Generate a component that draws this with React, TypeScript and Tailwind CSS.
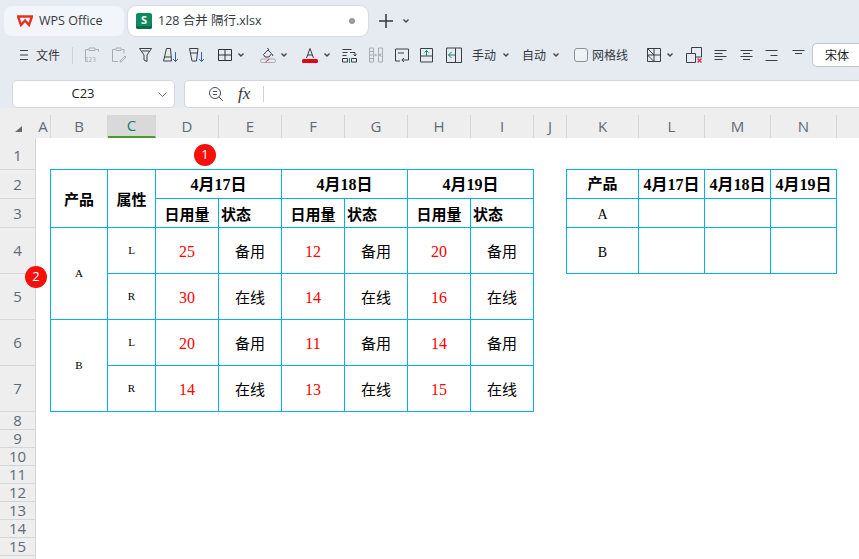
import type { ReactNode } from "react";

const ui = "font-['Noto_Sans_CJK_SC',sans-serif]";
const latin = "font-['Open_Sans','Noto_Sans_CJK_SC',sans-serif]";
const cellFont = "font-['Liberation_Serif','Noto_Sans_CJK_SC',serif]";
const cell =
  "flex items-center justify-center border border-[#00b0f0] -mr-px -mb-px whitespace-nowrap " + cellFont;
const head = cell + " pt-[3px] text-[15px] font-bold text-black";
const stateHead = cell + " !justify-start pl-[2px] pt-[4px] text-[15px] font-bold text-black";
const unitHead = cell + " pt-[4px] text-[15px] font-bold text-black";
const dateHead = cell + " pt-[2px] text-[16px] font-bold text-black";
const num = cell + " pt-[3px] text-[16px] text-[#ff0000]";
const status = cell + " pt-[3px] text-[15px] text-black";
const small = cell + " text-[11px] text-black";
const big = cell + " pt-[3px] text-[14px] text-black";

const columns = [
  { label: "A", width: "w-[15px]" },
  { label: "B", width: "w-[57px]" },
  { label: "C", width: "w-[48px]", active: true },
  { label: "D", width: "w-[63px]" },
  { label: "E", width: "w-[63px]" },
  { label: "F", width: "w-[63px]" },
  { label: "G", width: "w-[63px]" },
  { label: "H", width: "w-[63px]" },
  { label: "I", width: "w-[63px]" },
  { label: "J", width: "w-[33px]" },
  { label: "K", width: "w-[72px]" },
  { label: "L", width: "w-[66px]" },
  { label: "M", width: "w-[66px]" },
  { label: "N", width: "w-[66px]" },
];

const rows = [
  { n: 1, h: "h-[32px] pt-[3px]" },
  { n: 2, h: "h-[29px]" },
  { n: 3, h: "h-[29px]" },
  { n: 4, h: "h-[46px]" },
  { n: 5, h: "h-[46px]" },
  { n: 6, h: "h-[46px]" },
  { n: 7, h: "h-[46px]" },
  { n: 8, h: "h-[18px]" },
  { n: 9, h: "h-[18px]" },
  { n: 10, h: "h-[18px]" },
  { n: 11, h: "h-[18px]" },
  { n: 12, h: "h-[18px]" },
  { n: 13, h: "h-[18px]" },
  { n: 14, h: "h-[18px]" },
  { n: 15, h: "h-[18px]" },
];

const dates = ["4月17日", "4月18日", "4月19日"];

const groups = [
  {
    product: "A",
    lines: [
      { side: "L", values: ["25", "12", "20"], state: "备用" },
      { side: "R", values: ["30", "14", "16"], state: "在线" },
    ],
  },
  {
    product: "B",
    lines: [
      { side: "L", values: ["20", "11", "14"], state: "备用" },
      { side: "R", values: ["14", "13", "15"], state: "在线" },
    ],
  },
];

function Icon({ w = 16, children, className = "" }: { w?: number; children: ReactNode; className?: string }) {
  return (
    <svg width={w} height={16} viewBox={`0 0 ${w} 16`} fill="none" stroke="#3a3f45" strokeWidth="1" className={"shrink-0 " + className}>
      {children}
    </svg>
  );
}

function Chevron({ className = "" }: { className?: string }) {
  return (
    <svg width="6" height="4" viewBox="0 0 6 4" fill="none" stroke="#444" strokeWidth="1.4" className={"shrink-0 " + className}>
      <path d="M.5.5 3 3 5.5.5" />
    </svg>
  );
}

function Badge({ n, className }: { n: number; className: string }) {
  return (
    <div className={"absolute flex h-[22px] w-[22px] items-center justify-center rounded-full bg-[#f5100c] text-[13px] text-white " + latin + " " + className}>
      {n}
    </div>
  );
}

function Toolbar() {
  return (
    <div className={"flex h-[30px] items-center text-[12px] text-[#33383e] " + ui}>
      <Icon w={10} className="ml-[19px]">
        <path d="M1 3.5h8M1 8h8M1 12.5h8" />
      </Icon>
      <span className="ml-[7px]">文件</span>
      <div className="ml-[12px] h-[17px] w-px bg-[#cfd3da]" />
      <Icon w={14} className="ml-[12px]">
        <g stroke="#a9adb3">
          <path d="M3.5 2.500H.5v12M10.500 2.500h3v2M4 1h6v2.500H4z" />
          <text x="0" y="14.500" fontSize="6.500" stroke="none" fill="#a9adb3">123</text>
        </g>
      </Icon>
      <Icon className="ml-[12px]">
        <g stroke="#a9adb3">
          <path d="M4 2.500H1.500v12H7M11 2.500h2v4M5 1h5v2.500H5zM9 14l5-5 1 1-5 5H9z" />
        </g>
      </Icon>
      <Icon w={13} className="ml-[12px]">
        <path d="M.5 1.500h12L8 8v6.500L5 13V8zM3 4h7" />
      </Icon>
      <Icon w={16} className="ml-[11px]">
        <path d="M3.500 1.500h4l1 12.500H.5zM1.500 10h7" />
        <path d="M12.500 5v9.500M10 12l2.500 2.500L15 12" stroke="#2f5fd0" />
      </Icon>
      <Icon w={16} className="ml-[10px]">
        <path d="M.5 1.500H9L7.500 14H3zM1.500 6H9" />
        <path d="M12.500 5v9.500M10 12l2.500 2.500L15 12" stroke="#2f5fd0" />
      </Icon>
      <Icon w={14} className="ml-[13px]">
        <path d="M.5 2.500h13v11H.5zM7 2.500v11M.5 8h13" stroke="#2c3036" />
      </Icon>
      <Chevron className="ml-[6px]" />
      <Icon w={16} className="ml-[16px]">
        <path d="M3.500 7.500 8 3l3.500 3.500L9 10H5zM7.500 1l1.500 2M12 7l1 2" />
        <rect x=".5" y="12" width="15" height="3.500" rx="1.700" stroke="#a9adb3" />
        <path d="M5.500 15l4-3" stroke="#e0393a" />
      </Icon>
      <Chevron className="ml-[5px]" />
      <svg width="16" height="16" viewBox="0 0 16 16" className="ml-[15px] shrink-0">
        <path d="M4.500 11 8 1.500l3.500 9.500M5.700 8h4.600" fill="none" stroke="#3a3f45" />
        <rect x="0" y="12" width="16" height="4" rx="1.500" fill="#e60012" />
      </svg>
      <Chevron className="ml-[6px]" />
      <Icon w={15} className="ml-[12px]">
        <path d="M.5 2.500h9M.5 5.500h5M.5 8.500h4M8 5.500h5v3.500M11.500 7.500 13 9l1.500-1.500M.5 11.500h5v3.500h-5zM14.500 11.500h-5v3.500h5z" />
        <path d="M7.500 11v5" stroke="#0f8a5f" />
      </Icon>
      <Icon w={14} className="ml-[12px]">
        <g stroke="#a9adb3">
          <path d="M.5 1h4v14h-4zM9.500 1h4v14h-4zM.5 4.500h4M.5 8h4M.5 11.500h4M5.500 7l2 2M7.500 7l-2 2" />
        </g>
        <path d="M12 6.500 10.500 8l1.500 1.500" stroke="#3f9b78" />
      </Icon>
      <Icon w={14} className="ml-[12px]">
        <path d="M5 14H.5V2h13v7M13.500 8.500V13H7M9 11l-2.200 2L9 15M3 6h6" />
      </Icon>
      <Icon w={13} className="ml-[11px]">
        <path d="M.5 9V1.500h12V9M0 9h13M.5 9v6h12V9" />
        <path d="M6.500 9V3.500M4.500 5.500l2-2 2 2" stroke="#0f8a5f" />
      </Icon>
      <Icon className="ml-[13px]">
        <path d="M.5 1h15v14.500H.5zM9.500 1v14.500" />
        <path d="M9 8H2.500M5.500 5l-3 3 3 3" stroke="#0f8a5f" />
      </Icon>
      <span className="ml-[10px]">手动</span>
      <Chevron className="ml-[7px]" />
      <span className="ml-[13px]">自动</span>
      <Chevron className="ml-[7px]" />
      <div className="ml-[15px] h-[14px] w-[14px] rounded-[3px] border border-[#8d9197] bg-[#eef1f5]" />
      <span className="ml-[4px]">网格线</span>
      <Icon w={14} className="ml-[19px]">
        <path d="M.5 1.500h13v13H.5zM7 1.500v13M.5 8h13M.5 1.500 7 8M.5 8 7 14.500" />
      </Icon>
      <Chevron className="ml-[6px]" />
      <Icon className="ml-[13px]">
        <path d="M5.500 6V.5h10V10H10M.5 6.500h9v9h-9z" />
        <path d="M11.500 11.500l4 4M15.500 11.500l-4 4" stroke="#d8355a" strokeWidth="1.500" />
      </Icon>
      <Icon w={13} className="ml-[12px]">
        <path d="M.5 3.500h12M.5 6.500h8M.5 9.500h12M.5 12.500h8" />
      </Icon>
      <Icon w={13} className="ml-[13px]">
        <path d="M.5 3.500h12M3 6.500h7M.5 9.500h12M3 12.500h7" />
      </Icon>
      <Icon w={13} className="ml-[12px]">
        <path d="M.5 3.500h12M5.500 8.500h7M.5 13.500h12" />
      </Icon>
      <Icon w={13} className="ml-[14px]">
        <path d="M.5 3.500h12M3 6.500h7" />
      </Icon>
      <div className="ml-[7px] flex h-[24px] flex-1 items-center rounded-l-[5px] border border-r-0 border-[#c3c7cd] bg-white pl-[12px] text-[#222]">
        宋体
      </div>
    </div>
  );
}

function MainTable() {
  return (
    <div className="grid grid-cols-[57px_48px_63px_63px_63px_63px_63px_63px] grid-rows-[29px_29px_46px_46px_46px_46px]">
      <div className={head + " row-span-2"}>产品</div>
      <div className={head + " row-span-2"}>属性</div>
      {dates.map((d) => (
        <div key={d} className={dateHead + " col-span-2"}>{d}</div>
      ))}
      {dates.map((d) => [
        <div key={d + "u"} className={unitHead}>日用量</div>,
        <div key={d + "s"} className={stateHead}>状态</div>,
      ])}
      {groups.map((g) =>
        g.lines.map((line, i) => [
          i === 0 && (
            <div key={g.product} className={small + " row-span-2"}>{g.product}</div>
          ),
          <div key={g.product + line.side} className={small}>{line.side}</div>,
          line.values.map((v, j) => [
            <div key={g.product + line.side + j + "v"} className={num}>{v}</div>,
            <div key={g.product + line.side + j + "s"} className={status}>{line.state}</div>,
          ]),
        ])
      )}
    </div>
  );
}

function SummaryTable() {
  return (
    <div className="ml-[33px] grid grid-cols-[72px_66px_66px_66px] grid-rows-[29px_29px_46px]">
      <div className={cell + " pt-[1px] text-[15px] font-bold text-black"}>产品</div>
      {dates.map((d) => (
        <div key={d} className={dateHead}>{d}</div>
      ))}
      {groups.map((g) => [
        <div key={g.product} className={big}>{g.product}</div>,
        dates.map((d) => <div key={g.product + d} className={cell} />),
      ])}
    </div>
  );
}

export default function App() {
  return (
    <div className="flex h-[559px] w-[859px] flex-col overflow-hidden bg-[#e6eaf1]">
      {/* tabs */}
      <div className={"flex h-[40px] items-start gap-[4px] pl-[4px] pt-[6px] " + latin}>
        <div className="flex h-[30px] w-[120px] items-center rounded-[8px] bg-[#f2f5f9] pl-[13px] text-[12.5px] text-[#33383e]">
          <svg width="16" height="12" viewBox="0 0 16 12" fill="none" stroke="#e8301f" strokeWidth="2.400">
            <path d="M1 1.500h14L12 10 8 5.500 4 10z" strokeLinejoin="miter" />
          </svg>
          <span className="ml-[6px]">WPS Office</span>
        </div>
        <div className="flex h-[30px] w-[240px] items-center rounded-[8px] bg-white pl-[8px] pr-[13px] text-[12.5px] text-[#33383e] shadow-[0_0_2px_rgba(0,0,0,0.2)]">
          <div className="flex h-[16px] w-[16px] items-start justify-center rounded-[2px] bg-[#0f8a5f] text-[11px] font-bold leading-[13px] text-white shadow-[inset_0_-3px_0_#0a6e4b]">
            S
          </div>
          <span className={"ml-[6px] " + latin}>128 合并 隔行.xlsx</span>
          <div className="ml-auto h-[6px] w-[6px] rounded-full bg-[#9a9a9a]" />
        </div>
        <div className="ml-[7px] flex h-[30px] items-center">
          <svg width="14" height="14" viewBox="0 0 14 14" stroke="#33383e" strokeWidth="1.500">
            <path d="M7 0v14M0 7h14" />
          </svg>
          <Chevron className="ml-[10px]" />
        </div>
      </div>

      <Toolbar />

      {/* formula bar */}
      <div className={"mt-[10px] flex h-[28px] " + latin}>
        <div className="ml-[12px] flex h-[28px] w-[163px] items-center rounded-[5px] border border-[#d3d6dc] bg-white pr-[7px] text-[13px] text-[#222]">
          <span className="flex-1 pr-[5px] text-center">C23</span>
          <svg width="9" height="5" viewBox="0 0 9 5" fill="none" stroke="#777">
            <path d="M.5.5l4 4 4-4" />
          </svg>
        </div>
        <div className="ml-[9px] flex h-[28px] flex-1 items-center rounded-l-[5px] border border-r-0 border-[#d3d6dc] bg-white pl-[23px]">
          <svg width="16" height="16" viewBox="0 0 16 16" fill="none" stroke="#4a4f55">
            <circle cx="7" cy="7" r="5.500" />
            <path d="M11 11l4 4M5 5.500h4M5 8.500h4" />
          </svg>
          <span className="ml-[14px] font-['Liberation_Serif',serif] text-[17px] italic text-[#33383e]">fx</span>
          <div className="ml-[13px] h-[16px] w-px bg-[#cfd3da]" />
        </div>
      </div>

      {/* sheet */}
      <div className={"relative flex flex-1 flex-col bg-[#eeeeee] " + latin}>
        <div className="flex h-[30px] shrink-0 pt-[7px]">
          <div className="relative w-[36px]">
            <div className="absolute left-[15px] top-[11px] h-0 w-0 border-b-[6px] border-l-[7px] border-b-[#6a6a6a] border-l-transparent" />
          </div>
          {columns.map((c) => (
            <div
              key={c.label}
              className={
                "flex items-center justify-center border-r border-[#d6d6d6] text-[15px] leading-none " +
                c.width +
                (c.active
                  ? " border-b-2 border-b-[#4c9a2a] bg-[#d9d9d9] text-[#1f7a6a]"
                  : " text-[#5f6a76]")
              }
            >
              {c.label}
            </div>
          ))}
        </div>
        <div className="flex min-h-0 flex-1">
          <div className="w-[36px] shrink-0 border-r border-[#d6d6d6]">
            {rows.map((r) => (
              <div key={r.n} className={"flex items-center justify-center border-b border-[#d6d6d6] text-[15px] leading-none text-[#5f6a76] " + r.h}>
                {r.n}
              </div>
            ))}
          </div>
          <div className="flex flex-1 items-start bg-white pl-[14px] pt-[31px]">
            <MainTable />
            <SummaryTable />
          </div>
        </div>
        <Badge n={1} className="left-[194px] top-[36px]" />
        <Badge n={2} className="left-[25px] top-[158px]" />
      </div>
    </div>
  );
}
